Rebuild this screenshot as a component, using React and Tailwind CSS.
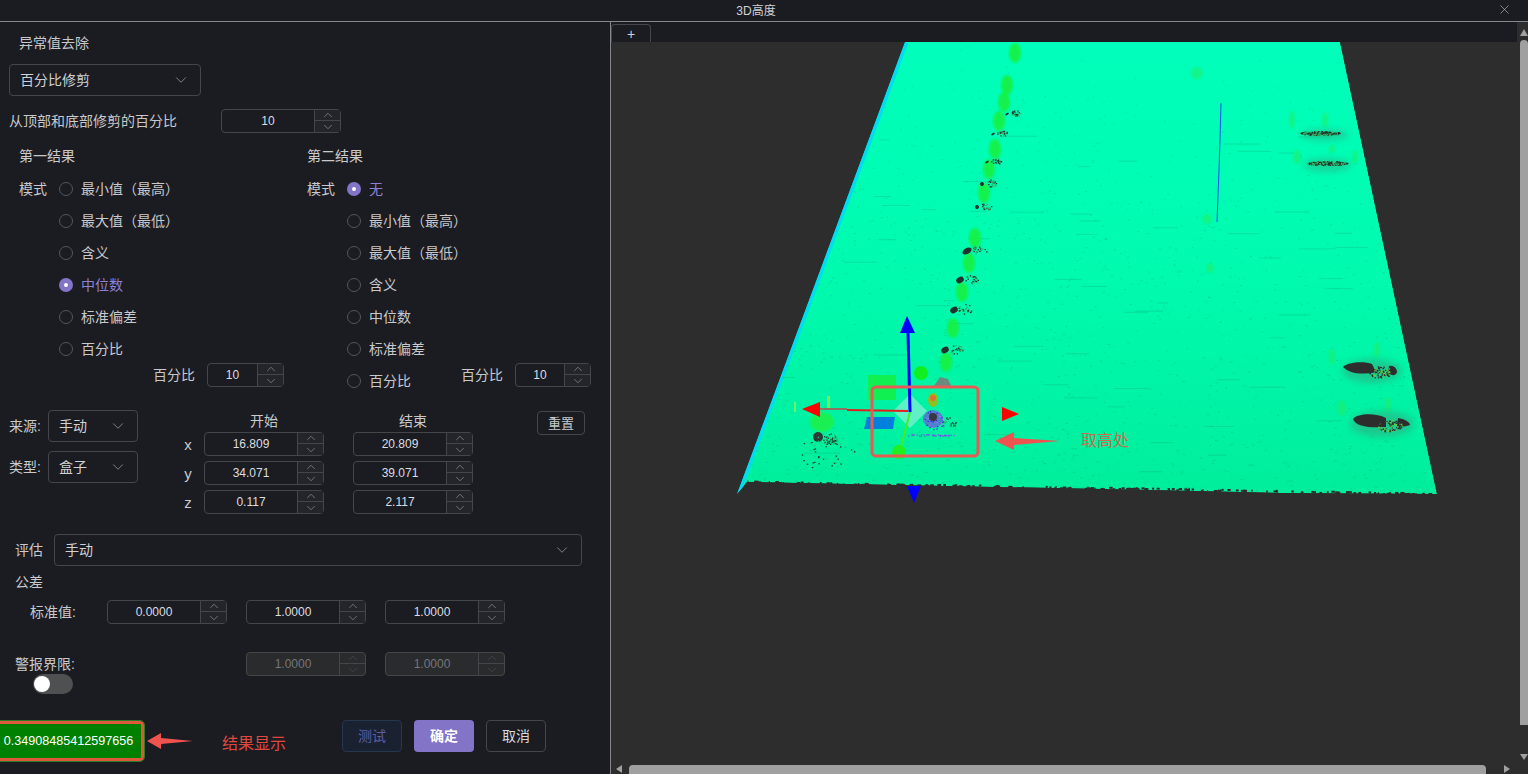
import { ChevronDown, ChevronUp, X } from "lucide-react";

const cjk = { fontFamily: '"Liberation Sans", "Noto Sans CJK SC", sans-serif' };

function NumberBox({ value, width = "w-[120px]", disabled = false }) {
    return (
        <div className={`flex h-6 shrink-0 rounded border border-[#45464a] text-xs ${width} ${disabled ? "bg-[#2a2b2c] text-[#75767a]" : "text-[#dcdde0]"}`}>
            <div className="flex flex-1 items-center justify-center">{value}</div>
            <div className={`flex w-[26px] flex-col border-l border-[#45464a] ${disabled ? "text-[#55565a]" : "text-[#a8a9ac] bg-[#24252a]"}`}>
                <div className="flex h-[11px] items-center justify-center overflow-hidden border-b border-[#45464a]"><ChevronUp size={14} strokeWidth={1} className="shrink-0" /></div>
                <div className="flex h-[11px] items-center justify-center overflow-hidden"><ChevronDown size={14} strokeWidth={1} className="shrink-0" /></div>
            </div>
        </div>
    );
}

function SelectBox({ label, className }) {
    return (
        <div className={`flex h-8 items-center justify-between rounded border border-[#45464a] pl-[10px] pr-[10px] text-[#d0d1d4] ${className}`}>
            <span>{label}</span>
            <ChevronDown size={18} strokeWidth={1} className="text-[#a0a1a4]" />
        </div>
    );
}

function Radio({ label, checked = false }) {
    return (
        <div className="flex h-8 items-center gap-2 whitespace-nowrap">
            {checked ? (
                <span className="flex size-[14px] shrink-0 items-center justify-center rounded-full bg-[#8474c8]">
                    <span className="size-1 rounded-full bg-white" />
                </span>
            ) : (
                <span className="size-[14px] shrink-0 rounded-full border border-[#55565a]" />
            )}
            <span className={checked ? "text-[#8f80d4]" : "text-[#c8c9cc]"}>{label}</span>
        </div>
    );
}

const modes = ["最小值（最高）", "最大值（最低）", "含义", "中位数", "标准偏差", "百分比"];

// seeded noise so the speckles stay the same on every load
function speckles(count, seed, fn) {
    let s = seed;
    const rnd = () => {
        s = (s * 16807) % 2147483647;
        return s / 2147483647;
    };
    const out = [];
    for (let i = 0; i < count; i++) out.push(fn(rnd, i));
    return out;
}

const floorDots = speckles(1300, 77, (rnd) => {
    const t = Math.pow(rnd(), 0.55);
    const y = 42 + t * 450;
    const left = 907 - t * 170;
    const right = 1340 + t * 97;
    return { x: left + rnd() * (right - left), y, w: 1 + Math.floor(rnd() * 3) * t };
});

const streaks = speckles(60, 91, (rnd) => {
    const t = 0.2 + rnd() * 0.8;
    const y = 42 + t * 450;
    const left = 907 - t * 170;
    const right = 1340 + t * 97;
    return { x: left + rnd() * (right - left - 40), y, w: 10 + rnd() * 26 };
});

// little bites along the lower edge of the cloud
const edgeBites = speckles(170, 53, (rnd) => {
    const x = 747 + rnd() * 690;
    return { x, y: 482 + ((x - 747) / 690) * 12 - rnd() * 1.5, w: 1 + rnd() * 3 };
});

function Blob({ cx, cy, rx, ry, seed, n = 90, dark = "#23302c", light = "#35b060" }) {
    const dots = speckles(n, seed, (rnd) => {
        const a = rnd() * Math.PI * 2;
        const r = Math.sqrt(rnd());
        return { x: cx + Math.cos(a) * r * rx, y: cy + Math.sin(a) * r * ry, g: rnd() > 0.6 };
    });
    return (
        <g>
            {dots.map((d, i) => (
                <rect key={i} x={d.x} y={d.y} width="1.4" height="1.2" fill={d.g ? light : dark} />
            ))}
        </g>
    );
}

const posts = [
    [1015, 53], [1007, 85], [1004, 102], [999, 121], [995, 149], [989, 169], [984, 193],
    [975, 238], [969, 263], [962, 292], [953, 328], [946, 362],
];

const faintPosts = [
    [1197, 73, 6, 6], [1207, 219, 5, 5], [1210, 268, 4, 5], [1292, 120, 3, 9], [1325, 120, 3, 8], [1297, 157, 4, 7],
    [1332, 149, 3, 4], [1355, 157, 3, 7], [1377, 350, 3, 8], [1332, 357, 3, 8], [1388, 405, 3, 8], [1342, 408, 4, 8],
];

// dark gaps behind the row of posts: solid part, then speckle to the right
const gaps = [
    [1007, 114, 2, 1], [993, 134, 2, 1], [987, 162, 2, 1], [982, 184, 2, 2], [977, 207, 2, 2],
    [967, 251, 5, 3], [960, 280, 4, 3], [954, 310, 4, 3], [945, 350, 4, 3],
];

function PointCloud() {
    return (
        <svg viewBox="611 42 917 732" className="block h-full w-full">
            <defs>
                <linearGradient id="floor" x1="0" y1="42" x2="0" y2="494" gradientUnits="userSpaceOnUse">
                    <stop offset="0" stopColor="#00ffbb" />
                    <stop offset="0.5" stopColor="#00fbaf" />
                    <stop offset="1" stopColor="#00ee9c" />
                </linearGradient>
                <clipPath id="floorClip">
                    <polygon points="905,42 1340,42 1437,494 1280,493 1150,490 747,482 737,494" />
                </clipPath>
                <filter id="soft" x="-50%" y="-50%" width="200%" height="200%">
                    <feGaussianBlur stdDeviation="1.2" />
                </filter>
                <filter id="softer" x="-50%" y="-50%" width="200%" height="200%">
                    <feGaussianBlur stdDeviation="3" />
                </filter>
            </defs>
            <g clipPath="url(#floorClip)">
                <polygon points="905,42 1340,42 1437,494 1280,493 1150,490 747,482 737,494" fill="url(#floor)" />
                <line x1="905" y1="42" x2="737" y2="494" stroke="#00dcf0" strokeWidth="7" />
                {floorDots.map((d, i) => (
                    <rect key={i} x={d.x} y={d.y} width={d.w} height="1" fill="#06c78e" opacity="0.5" />
                ))}
                {streaks.map((d, i) => (
                    <rect key={i} x={d.x} y={d.y} width={d.w} height="1" fill="#10a878" opacity="0.3" />
                ))}
            </g>
            {edgeBites.map((d, i) => (
                <rect key={i} x={d.x} y={d.y} width={d.w} height="2" fill="#2d2d2d" />
            ))}
            <g filter="url(#soft)">
                {posts.map(([x, y], i) => (
                    <ellipse key={i} cx={x} cy={y} rx="6" ry="10" fill="#14f040" opacity="0.9" />
                ))}
                {faintPosts.map(([x, y, rx, ry], i) => (
                    <ellipse key={i} cx={x} cy={y} rx={rx} ry={ry} fill="#20ec60" opacity="0.55" />
                ))}
            </g>
            <circle cx="921" cy="373" r="7" fill="#10f020" />
            {gaps.map(([x, y, rx, ry], i) => (
                <g key={i}>
                    <ellipse cx={x} cy={y} rx={rx} ry={ry} fill="#23302c" transform={`rotate(-30 ${x} ${y})`} />
                    <Blob cx={x + rx + 7} cy={y - 1} rx={rx + 3} ry={ry + 2} seed={i * 31 + 5} n={24} />
                </g>
            ))}
            <polygon points="940,377 948,379 952,388 934,386" fill="#6a8a80" />

            {/* pits on the right */}
            <ellipse cx="1325" cy="135" rx="24" ry="6" fill="#30a880" opacity="0.45" filter="url(#softer)" />
            <Blob cx={1320} cy={133} rx={20} ry={2} seed={11} n={190} />
            <ellipse cx="1327" cy="165" rx="24" ry="7" fill="#30a880" opacity="0.45" filter="url(#softer)" />
            <Blob cx={1327} cy={163} rx={20} ry={2} seed={13} n={190} />
            <ellipse cx="1372" cy="371" rx="30" ry="12" fill="#30a880" opacity="0.55" filter="url(#softer)" />
            <path d="M1343 367 C1348 362 1364 361 1372 364 L1376 372 C1362 375 1350 374 1343 367 Z M1389 366 C1394 365 1397 369 1397 372 C1396 376 1392 376 1388 373 Z" fill="#2d2d2d" />
            <Blob cx={1380} cy={372} rx={11} ry={6} seed={17} n={90} dark="#2d2d2d" light="#68d040" />
            <ellipse cx="1382" cy="424" rx="32" ry="13" fill="#30a880" opacity="0.55" filter="url(#softer)" />
            <path d="M1353 419 C1358 413 1376 413 1386 418 L1386 427 C1370 428 1356 427 1353 419 Z M1398 418 C1404 419 1410 422 1410 425 C1404 427 1400 427 1397 426 Z" fill="#2d2d2d" />
            <Blob cx={1390} cy={426} rx={12} ry={6} seed={19} n={90} dark="#2d2d2d" light="#68d040" />

            {/* thin blue line in the middle of the floor */}
            <polyline points="1221,103 1220,140 1219,170 1217,222" fill="none" stroke="#1050f0" strokeWidth="1" />

            {/* bottom left clump */}
            <ellipse cx="822" cy="422" rx="12" ry="10" fill="#20f040" opacity="0.8" filter="url(#soft)" />
            <rect x="794" y="402" width="2" height="10" fill="#a0f040" opacity="0.7" />
            <rect x="827" y="396" width="3" height="13" fill="#a0f040" opacity="0.7" />
            <circle cx="818" cy="437" r="5" fill="#2d3a36" />
            <Blob cx={830} cy={439} rx={7} ry={6} seed={29} n={40} />
            <Blob cx={826} cy={452} rx={30} ry={17} seed={37} n={50} light="#20c878" />

            {/* center of the transform gizmo */}
            <rect x="868" y="375" width="28" height="25" fill="#10f050" />
            <polygon points="867,417 895,417 893,429 864,429" fill="#0080dc" />
            <polygon points="910,394 927,411 910,428 893,411" fill="#60f0c8" />
            <Blob cx={930} cy={435} rx={25} ry={1} seed={41} n={40} dark="#7060e0" light="#7060e0" />
            <Blob cx={948} cy={422} rx={9} ry={5} seed={43} n={20} />
            <ellipse cx="933" cy="400" rx="5" ry="7" fill="#90c020" />
            <ellipse cx="933" cy="398" rx="3" ry="3" fill="#e07030" />
            <ellipse cx="933" cy="419" rx="10" ry="9" fill="#7050e0" opacity="0.7" />
            <Blob cx={934} cy={420} rx={11} ry={10} seed={23} n={40} dark="#4030d0" light="#9080f0" />
            <circle cx="933" cy="417" r="4" fill="#383840" />
            <line x1="910" y1="412" x2="900" y2="451" stroke="#40f020" strokeWidth="2" />
            <circle cx="899" cy="452" r="7" fill="#20f020" />
            <line x1="908" y1="333" x2="910" y2="412" stroke="#0000ff" strokeWidth="3" />
            <polygon points="907,316 900,333 915,333" fill="#0000ff" />
            <line x1="820" y1="409" x2="847" y2="409" stroke="#907060" strokeWidth="2" />
            <line x1="847" y1="410" x2="908" y2="411" stroke="#e02020" strokeWidth="2" />
            <polygon points="802,409 820,402 820,417" fill="#ff0000" />
            <polygon points="1019,414 1002,407 1002,421" fill="#ff0000" />
            <polygon points="914,503 907,486 921,486" fill="#0000ff" />

            {/* annotation on top of the picture */}
            <rect x="872" y="387" width="106" height="69" rx="4" fill="none" stroke="#e85a55" strokeWidth="3" />
            <polygon points="995,441 1014,432 1014,438 1060,441 1014,445 1014,450" fill="#ef5350" />
        </svg>
    );
}

export default function App() {
    return (
        <div className="flex h-[774px] w-[1528px] flex-col overflow-hidden bg-[#1b1c22] text-[14px] leading-none text-[#c8c9cc]" style={cjk}>
            {/* title bar */}
            <div className="relative flex h-[22px] shrink-0 items-center justify-center border-b border-[#86878a] pr-4 text-xs text-[#d0d1d4]">
                3D高度
                <X size={15} strokeWidth={1} className="absolute right-[16px] top-[2px] text-[#c0c1c4]" />
            </div>

            <div className="flex min-h-0 flex-1">
                {/* left settings panel */}
                <div className="relative w-[611px] shrink-0 border-r border-[#86878a]">
                    <div className="flex h-[42px] items-center pl-[19px]">异常值去除</div>
                    <SelectBox label="百分比修剪" className="ml-[9px] w-[192px]" />
                    <div className="mt-[13px] flex items-center pl-[9px]">
                        <span className="w-[212px]">从顶部和底部修剪的百分比</span>
                        <NumberBox value="10" />
                    </div>

                    {/* first / second result */}
                    <div className="mt-[11px] flex pl-[19px]">
                        <div className="w-[288px] shrink-0">
                            <div className="flex h-6 items-center">第一结果</div>
                            <div className="mt-[5px] flex">
                                <span className="w-10 pt-[9px]">模式</span>
                                <div>
                                    {modes.map((m) => (
                                        <Radio key={m} label={m} checked={m === "中位数"} />
                                    ))}
                                </div>
                            </div>
                            <div className="-mt-[2px] flex items-center pl-[134px]">
                                <span className="w-[54px]">百分比</span>
                                <NumberBox value="10" width="w-[77px]" />
                            </div>
                        </div>
                        <div>
                            <div className="flex h-6 items-center">第二结果</div>
                            <div className="mt-[5px] flex">
                                <span className="w-10 pt-[9px]">模式</span>
                                <div className="w-[114px]">
                                    <Radio label="无" checked />
                                    {modes.map((m) => (
                                        <Radio key={m} label={m} />
                                    ))}
                                </div>
                                <div className="mt-[190px] flex items-center self-start">
                                    <span className="w-[54px]">百分比</span>
                                    <NumberBox value="10" width="w-[76px]" />
                                </div>
                            </div>
                        </div>
                    </div>

                    {/* source and box range */}
                    <div className="mt-[12px] flex pl-[9px]">
                        <div className="flex w-[175px] flex-col gap-[9px] pt-[1px]">
                            <div className="flex items-center">
                                <span className="w-[39px]">来源:</span>
                                <SelectBox label="手动" className="w-[90px]" />
                            </div>
                            <div className="flex items-center">
                                <span className="w-[39px]">类型:</span>
                                <SelectBox label="盒子" className="w-[90px]" />
                            </div>
                        </div>
                        <div className="flex w-[353px] flex-col">
                            <div className="flex h-[23px] items-center pl-5">
                                <span className="w-[120px] text-center">开始</span>
                                <span className="ml-[29px] w-[120px] text-center">结束</span>
                            </div>
                            {[["x", "16.809", "20.809"], ["y", "34.071", "39.071"], ["z", "0.117", "2.117"]].map(([axis, a, b]) => (
                                <div key={axis} className="mb-[5px] flex items-center">
                                    <span className="w-5 pr-3 text-center text-[15px]">{axis}</span>
                                    <NumberBox value={a} />
                                    <span className="w-[29px]" />
                                    <NumberBox value={b} />
                                </div>
                            ))}
                        </div>
                        <button className="mt-[2px] flex h-6 w-12 items-center justify-center rounded-sm border border-[#45464a] text-[13px]">重置</button>
                    </div>

                    {/* evaluation */}
                    <div className="mt-[15px] flex items-center pl-[15px]">
                        <span className="w-[39px]">评估</span>
                        <SelectBox label="手动" className="w-[528px]" />
                    </div>
                    <div className="mt-[9px] pl-[15px]">公差</div>
                    <div className="mt-[11px] flex items-center pl-[30px]">
                        <span className="w-[77px]">标准值:</span>
                        <NumberBox value="0.0000" />
                        <span className="w-[19px]" />
                        <NumberBox value="1.0000" />
                        <span className="w-[19px]" />
                        <NumberBox value="1.0000" />
                    </div>
                    <div className="mt-7 flex items-center pl-[15px]">
                        <span className="w-[231px]">警报界限:</span>
                        <NumberBox value="1.0000" disabled />
                        <span className="w-[19px]" />
                        <NumberBox value="1.0000" disabled />
                    </div>
                    <div className="ml-[33px] -mt-[2px] flex h-5 w-10 items-center rounded-full bg-[#4f5052] pl-[1px]">
                        <span className="size-4 rounded-full bg-white" />
                    </div>

                    {/* result and buttons */}
                    <div className="mt-[27px] flex items-start">
                        <div className="flex h-10 w-[144px] items-center justify-center rounded-r border-[3px] border-l-0 border-[#e0583c] bg-[#008000] pr-1 text-[12.6px] text-white outline outline-1 outline-[#2a7a2a]">
                            0.34908485412597656
                        </div>
                        <svg width="46" height="16" viewBox="0 0 46 16" className="ml-[3px] mt-3 shrink-0">
                            <polygon points="0,8 14,0 14,5 46,8 14,11 14,16" fill="#ef5350" />
                        </svg>
                        <span className="ml-[29px] mt-[15px] text-[16px] text-[#e0483e]">结果显示</span>
                        <button className="ml-[56px] -mt-[1px] flex h-8 w-[60px] items-center justify-center rounded border border-[#25364e] bg-[#1a2130] text-[#5f5ea0]">测试</button>
                        <button className="ml-3 -mt-[1px] flex h-8 w-[60px] items-center justify-center rounded bg-[#8474c8] font-bold text-white">确定</button>
                        <button className="ml-3 -mt-[1px] flex h-8 w-[60px] items-center justify-center rounded border border-[#45464a] text-[#d8d9dc]">取消</button>
                    </div>
                </div>

                {/* 3D view */}
                <div className="relative flex min-w-0 flex-1 flex-col">
                    <div className="flex h-5 shrink-0 items-end">
                        <div className="flex h-[18px] w-10 items-center justify-center rounded-t border border-b-0 border-[#45464a] text-[14px] text-[#d0d1d4]">+</div>
                    </div>
                    <div className="relative min-h-0 flex-1 bg-[#2d2d2d]">
                        <PointCloud />
                        <span className="absolute left-[470px] top-[391px] text-[16px] text-[#cc6a50]">取高处</span>
                    </div>

                    {/* vertical scrollbar */}
                    <div className="absolute right-0 top-0 h-5 w-[11px] bg-[#2d2d2d]" />
                    <div className="absolute right-0 top-[7px] h-0 w-0 border-x-[4px] border-b-[7px] border-x-transparent border-b-[#a0a0a0]" />
                    <div className="absolute right-0 top-[18px] h-[685px] w-2 rounded-t bg-[#a0a0a0]" />
                    <div className="absolute bottom-[14px] right-0 h-0 w-0 border-x-[4px] border-t-[6px] border-x-transparent border-t-[#a0a0a0]" />
                    {/* horizontal scrollbar */}
                    <div className="absolute bottom-[1px] left-[5px] h-0 w-0 border-y-[4px] border-r-[6px] border-y-transparent border-r-[#a0a0a0]" />
                    <div className="absolute bottom-0 left-[18px] h-[9px] w-[857px] rounded-t bg-[#a0a0a0]" />
                    <div className="absolute bottom-[1px] left-[893px] h-0 w-0 border-y-[4px] border-l-[6px] border-y-transparent border-l-[#a0a0a0]" />
                </div>
            </div>
        </div>
    );
}
